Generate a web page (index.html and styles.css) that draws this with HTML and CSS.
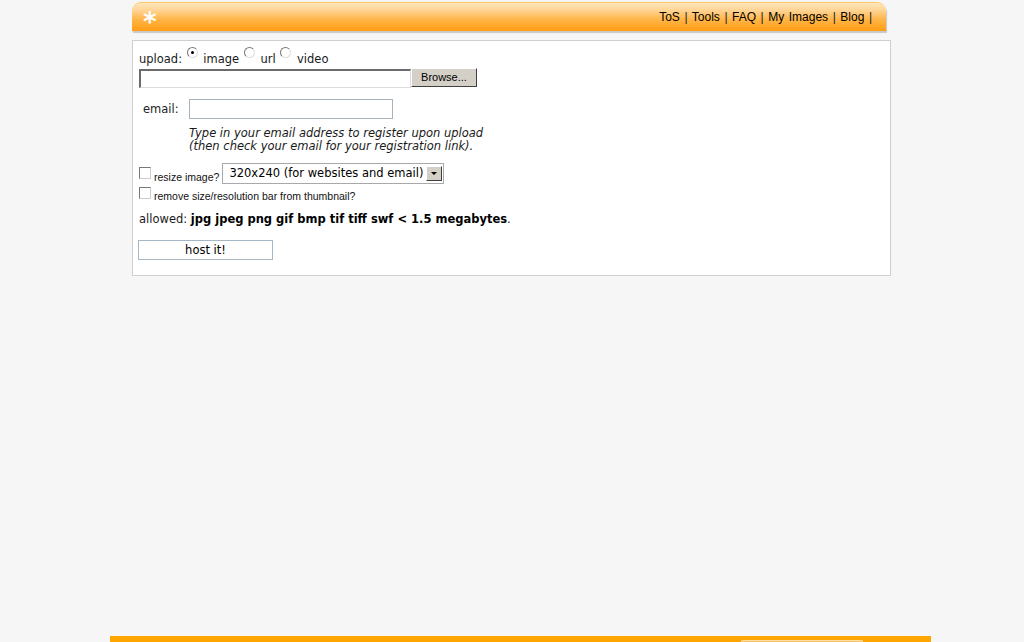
FILE: index.html
```html
<!DOCTYPE html>
<html lang="en">
<head>
    <meta charset="UTF-8">
    <title>Image Host</title>
    <link rel="stylesheet" href="styles.css">
</head>
<body>
    <div class="page">
        <!-- Top bar -->
        <div class="topbar">
            <span class="logo">*</span>
            <div class="nav">
                <a href="#">ToS</a> | <a href="#">Tools</a> | <a href="#">FAQ</a> | <a href="#">My Images</a> | <a href="#">Blog</a> |
            </div>
        </div>

        <!-- Upload form -->
        <div class="upload-box">
            <div class="row-type">
                upload:
                <span class="radio checked"></span> image
                <span class="radio"></span> url
                <span class="radio"></span> video
            </div>
            <div class="row-file">
                <span class="file-field"></span><span class="browse-btn">Browse...</span>
            </div>

            <div class="row-email">
                <span class="email-label">email:</span>
                <span class="email-field"></span>
            </div>
            <div class="email-hint">
                Type in your email address to register upon upload<br>
                (then check your email for your registration link).
            </div>

            <div class="row-check">
                <span class="checkbox"></span>
                <span class="small-label">resize image?</span>
                <span class="select">320x240 (for websites and email)<span class="select-arrow"></span></span>
            </div>
            <div class="row-check second">
                <span class="checkbox"></span>
                <span class="small-label">remove size/resolution bar from thumbnail?</span>
            </div>

            <div class="allowed">allowed: <b>jpg jpeg png gif bmp tif tiff swf &lt; 1.5 megabytes</b>.</div>

            <div class="host-btn">host it!</div>
        </div>

        <!-- Footer strip -->
        <div class="footer">
            <span class="footer-tab"></span>
        </div>
    </div>
</body>
</html>
```

FILE: styles.css
```css
html, body {
    margin: 0;
    height: 100%;
}

body {
    background-color: #f6f6f6;
    font-family: 'DejaVu Sans', Verdana, sans-serif;
    font-size: 11.5px;
    color: #111;
    overflow: hidden;
}

.page {
    height: 642px;
    display: flex;
    flex-direction: column;
}

/* Top bar */
.topbar {
    width: 754px;
    height: 29px;
    margin: 2px 0 0 132px;
    box-sizing: border-box;
    border-radius: 9px 9px 0 0;
    background: linear-gradient(#ffe6bd 0%, #ffd595 25%, #ffb445 60%, #ff9d14 100%);
    box-shadow: 1px 2px 1px #c8c8c8;
    border-top: 1px solid #ffc66b;
    display: flex;
    align-items: center;
    justify-content: space-between;
    padding: 0 14px 0 11px;
}

.logo {
    color: #fff;
    font-family: 'DejaVu Sans', sans-serif;
    font-size: 26px;
    font-weight: bold;
    line-height: 1;
    margin-top: 9px;
}

.nav {
    font-family: 'Liberation Sans', Arial, sans-serif;
    font-size: 12px;
    color: #222;
    word-spacing: 1.2px;
}

.nav a {
    color: #000;
    text-decoration: none;
}

/* Upload box */
.upload-box {
    width: 759px;
    margin: 9px 0 0 132px;
    box-sizing: border-box;
    height: 236px;
    background: #fff;
    border: 1px solid #cfcfcf;
    padding: 6px 6px 0 6px;
}

.row-type {
    height: 20px;
    line-height: 20px;
    color: #1a1a1a;
}

.radio {
    display: inline-block;
    width: 11px;
    height: 11px;
    box-sizing: border-box;
    border-radius: 50%;
    border: 1px solid #777;
    border-right-color: #ddd;
    border-bottom-color: #ddd;
    background: #fff;
    vertical-align: 5px;
    position: relative;
    margin: 0 2px 0 1px;
}

.radio.checked::after {
    content: "";
    position: absolute;
    left: 3px;
    top: 3px;
    width: 3px;
    height: 3px;
    border-radius: 50%;
    background: #000;
}

.row-file {
    display: flex;
    margin-top: 1px;
}

.file-field {
    width: 272px;
    height: 19px;
    box-sizing: border-box;
    border: 2px solid #6b6b6b;
    border-right-color: #dcdcdc;
    border-bottom-color: #dcdcdc;
    border-right-width: 1px;
    border-bottom-width: 1px;
    background: #fff;
    margin-top: 1px;
}

.browse-btn {
    width: 66px;
    height: 19px;
    box-sizing: border-box;
    background: #d4d0c8;
    border: 1px solid #fff;
    border-right-color: #404040;
    border-bottom-color: #404040;
    font-family: 'Liberation Sans', Arial, sans-serif;
    font-size: 11px;
    text-align: center;
    line-height: 17px;
    color: #000;
}

.row-email {
    display: flex;
    align-items: center;
    margin-top: 11px;
}

.email-label {
    width: 46px;
    padding-left: 4px;
    color: #222;
}

.email-field {
    width: 204px;
    height: 20px;
    box-sizing: border-box;
    border: 1px solid #a9b3bc;
    background: #fff;
}

.email-hint {
    margin: 8px 0 0 50px;
    font-style: italic;
    line-height: 13px;
    color: #1a1a1a;
}

.row-check {
    display: flex;
    align-items: flex-end;
    margin-top: 10px;
}

.row-check.second {
    margin-top: 3px;
    align-items: flex-start;
}

.checkbox {
    width: 12px;
    height: 12px;
    box-sizing: border-box;
    border: 1px solid #777;
    border-right-color: #ccc;
    border-bottom-color: #ccc;
    background: #fff;
    align-self: flex-start;
    margin-top: 4px;
}

.row-check.second .checkbox {
    margin-top: 0;
}

.small-label {
    font-family: 'Liberation Sans', Arial, sans-serif;
    font-size: 10.5px;
    line-height: 13px;
    margin-left: 3px;
    color: #111;
}

.row-check.second .small-label {
    margin-top: 3px;
}

.select {
    margin-left: 3px;
    width: 222px;
    height: 21px;
    box-sizing: border-box;
    border: 1px solid #a9a9a9;
    background: #fff;
    line-height: 19px;
    padding: 0 1px 0 6px;
    display: flex;
    justify-content: space-between;
    align-items: center;
    white-space: nowrap;
    color: #000;
}

.select-arrow {
    width: 16px;
    height: 15px;
    box-sizing: border-box;
    background: #d4d0c8;
    border: 1px solid #fff;
    border-right-color: #404040;
    border-bottom-color: #404040;
    position: relative;
}

.select-arrow::after {
    content: "";
    position: absolute;
    left: 4px;
    top: 5px;
    border-left: 3px solid transparent;
    border-right: 3px solid transparent;
    border-top: 3px solid #000;
}

.allowed {
    margin-top: 9px;
    color: #1a1a1a;
}

.allowed b {
    color: #000;
}

.host-btn {
    width: 135px;
    height: 20px;
    box-sizing: border-box;
    margin-top: 14px;
    margin-left: -1px;
    border: 1px solid #a5b6c5;
    background: #fff;
    text-align: center;
    line-height: 18px;
    color: #000;
}

/* Footer strip */
.footer {
    margin-top: auto;
    margin-left: 110px;
    width: 821px;
    height: 6px;
    background: #ffa500;
    position: relative;
}

.footer-tab {
    position: absolute;
    left: 631px;
    top: 4px;
    width: 120px;
    height: 4px;
    background: #ffc060;
    border: 1px solid #ffe0a8;
    border-bottom: none;
    border-radius: 2px 2px 0 0;
}
```
